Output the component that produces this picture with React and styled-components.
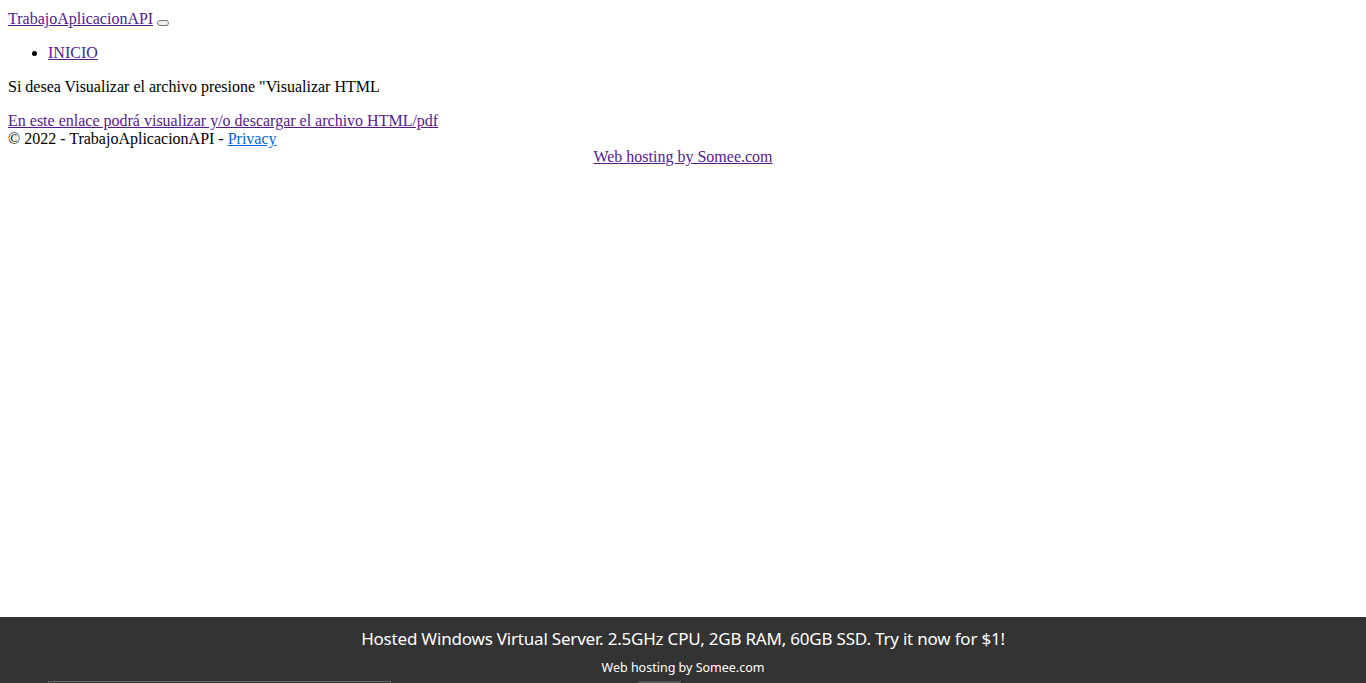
import React from "react";
import styled, { createGlobalStyle } from "styled-components";

const GlobalStyle = createGlobalStyle`
  body {
    margin: 8px;
    padding-top: 2px;
    font-family: "Liberation Serif", "Times New Roman", serif;
    font-size: 16px;
    color: #000;
    background: #fff;
  }
`;

const Link = styled.a`
  color: ${({ $blue }) => ($blue ? "#0366d6" : "#551a8b")};
  text-decoration: underline;
  cursor: pointer;
`;

const Header = styled.div`
  height: 18px;
`;

const Toggler = styled.button`
  width: 12px;
  height: 6px;
  padding: 0;
  border: 1px solid #767676;
  border-radius: 3px;
  background: #efefef;
  vertical-align: -1px;
`;

const NavList = styled.ul`
  margin: 16px 0;
  padding-left: 40px;
`;

const Text = styled.p`
  margin: 16px 0;
`;

const LinkLine = styled.p`
  margin: 16px 0 0;
`;

const Footer = styled.div``;

const HostLine = styled.div`
  text-align: center;
`;

const AdBar = styled.div`
  position: fixed;
  left: 0;
  right: 0;
  top: 617px;
  height: 80px;
  background: #333333;
  color: #fff;
  font-family: "Noto Sans", "Open Sans", sans-serif;
  text-align: center;
  overflow: hidden;
`;

const AdTitle = styled.div`
  font-size: 17px;
  line-height: 24px;
  padding-top: 10px;
  letter-spacing: -0.2px;
`;

const AdSub = styled.div`
  font-size: 12.5px;
  line-height: 18px;
  margin-top: 8px;
`;

const AdRow = styled.div`
  display: flex;
  align-items: flex-start;
  padding-left: 48px;
  margin-top: 4px;
`;

const AdInput = styled.div`
  width: 341px;
  height: 24px;
  border: 1px solid #666;
  background: #333;
`;

const AdButton = styled.div`
  width: 43px;
  height: 24px;
  margin-left: 247px;
  background: #555;
`;

export default function App() {
  return (
    <>
      <GlobalStyle />
      <Header>
        <Link>TrabajoAplicacionAPI</Link> <Toggler />
      </Header>
      <NavList>
        <li>
          <Link>INICIO</Link>
        </li>
      </NavList>
      <Text>Si desea Visualizar el archivo presione "Visualizar HTML</Text>
      <LinkLine>
        <Link>En este enlace podrá visualizar y/o descargar el archivo HTML/pdf</Link>
      </LinkLine>
      <Footer>
        © 2022 - TrabajoAplicacionAPI - <Link $blue>Privacy</Link>
      </Footer>
      <HostLine>
        <Link>Web hosting by Somee.com</Link>
      </HostLine>
      <AdBar>
        <AdTitle>
          Hosted Windows Virtual Server. 2.5GHz CPU, 2GB RAM, 60GB SSD. Try it now for $1!
        </AdTitle>
        <AdSub>Web hosting by Somee.com</AdSub>
        <AdRow>
          <AdInput />
          <AdButton />
        </AdRow>
      </AdBar>
    </>
  );
}
